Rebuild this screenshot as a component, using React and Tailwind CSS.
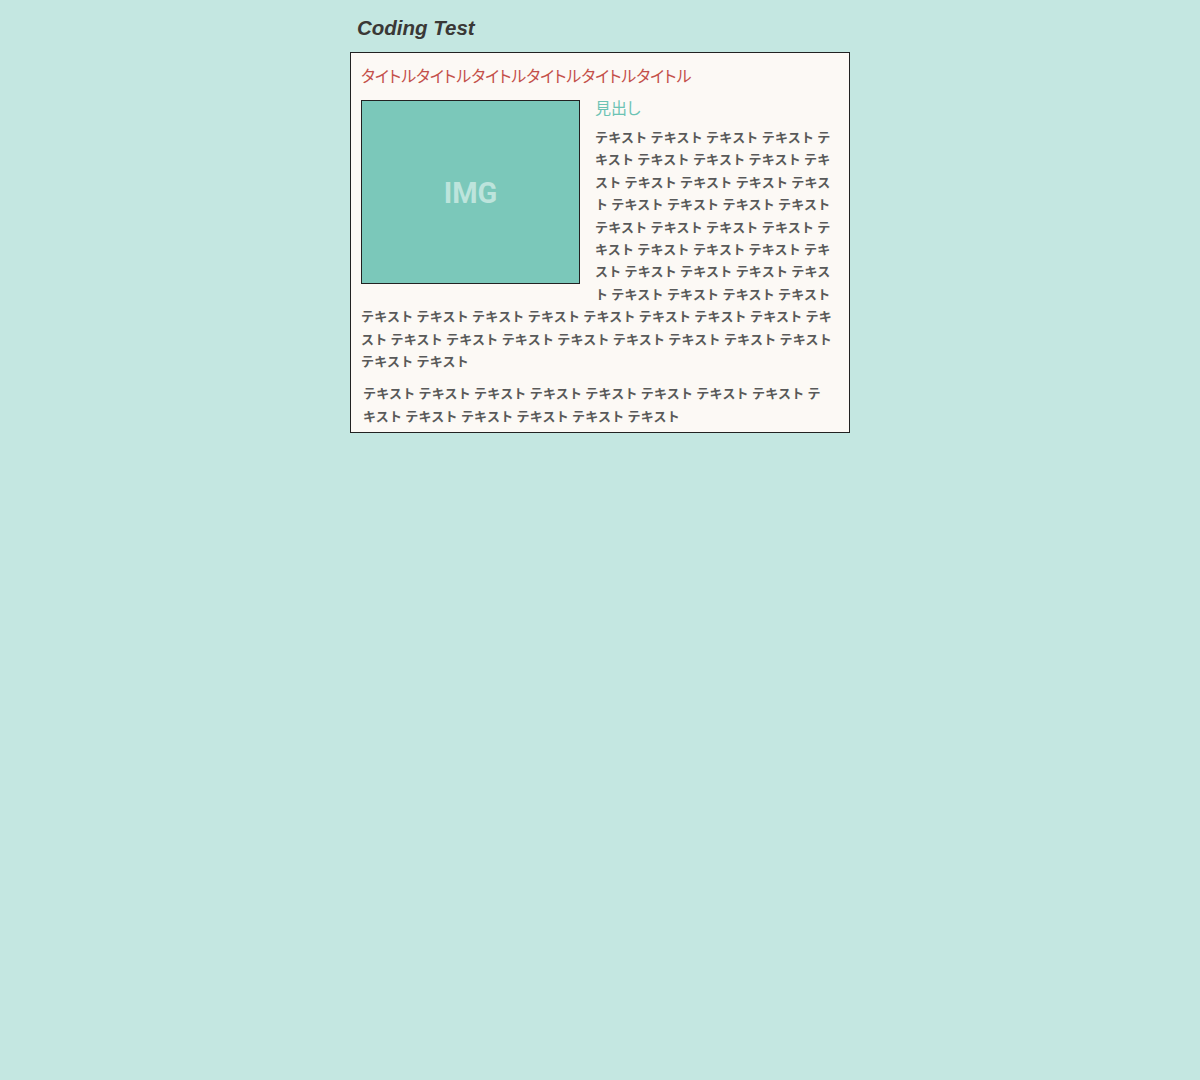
export default function App() {
  const t = (n) => Array(n).fill("テキスト").join(" ");
  return (
    <div className="min-h-[1080px] w-full bg-[#c4e7e1] pt-[14px]" style={{ fontFamily: '"Noto Sans CJK JP", sans-serif' }}>
      <div className="mx-auto w-[500px]">
        <h1 className="pl-[7px] text-[20.5px] font-bold italic leading-[28px] text-[#3a3836]" style={{ fontFamily: '"Liberation Sans", Arial, sans-serif' }}>
          Coding Test
        </h1>
        <div className="mt-[10px] border border-[#222] bg-[#fcf9f5] px-[10px] pt-[11px] pb-[5px]">
          <h2 className="text-[16px] leading-[22px] tracking-[-0.08px] text-[#c4504a]" style={{ fontFeatureSettings: '"palt"' }}>
            タイトルタイトルタイトルタイトルタイトルタイトル
          </h2>
          <div className="mt-[14px]">
            <div className="float-left mr-[15px] flex h-[184px] w-[219px] items-center justify-center border border-[#222] bg-[#7bc8ba]">
              <span className="mt-[3px] text-[29px] font-bold text-[#bde4dc]" style={{ fontFamily: 'Roboto, sans-serif' }}>IMG</span>
            </div>
            <h3 className="text-[16px] leading-[14px] text-[#6cc3b4]" style={{ fontFeatureSettings: '"palt"' }}>見出し</h3>
            <p className="mt-[12px] break-all text-[13px] font-bold leading-[22.4px] tracking-[0.2px] text-[#595959]">
              {t(53)}
            </p>
            <div className="clear-both" />
          </div>
          <p className="ml-[2px] mr-[6px] mt-[10px] break-all text-[13px] font-bold leading-[22.4px] tracking-[0.2px] text-[#595959]">
            {t(14)}
          </p>
        </div>
      </div>
    </div>
  );
}
